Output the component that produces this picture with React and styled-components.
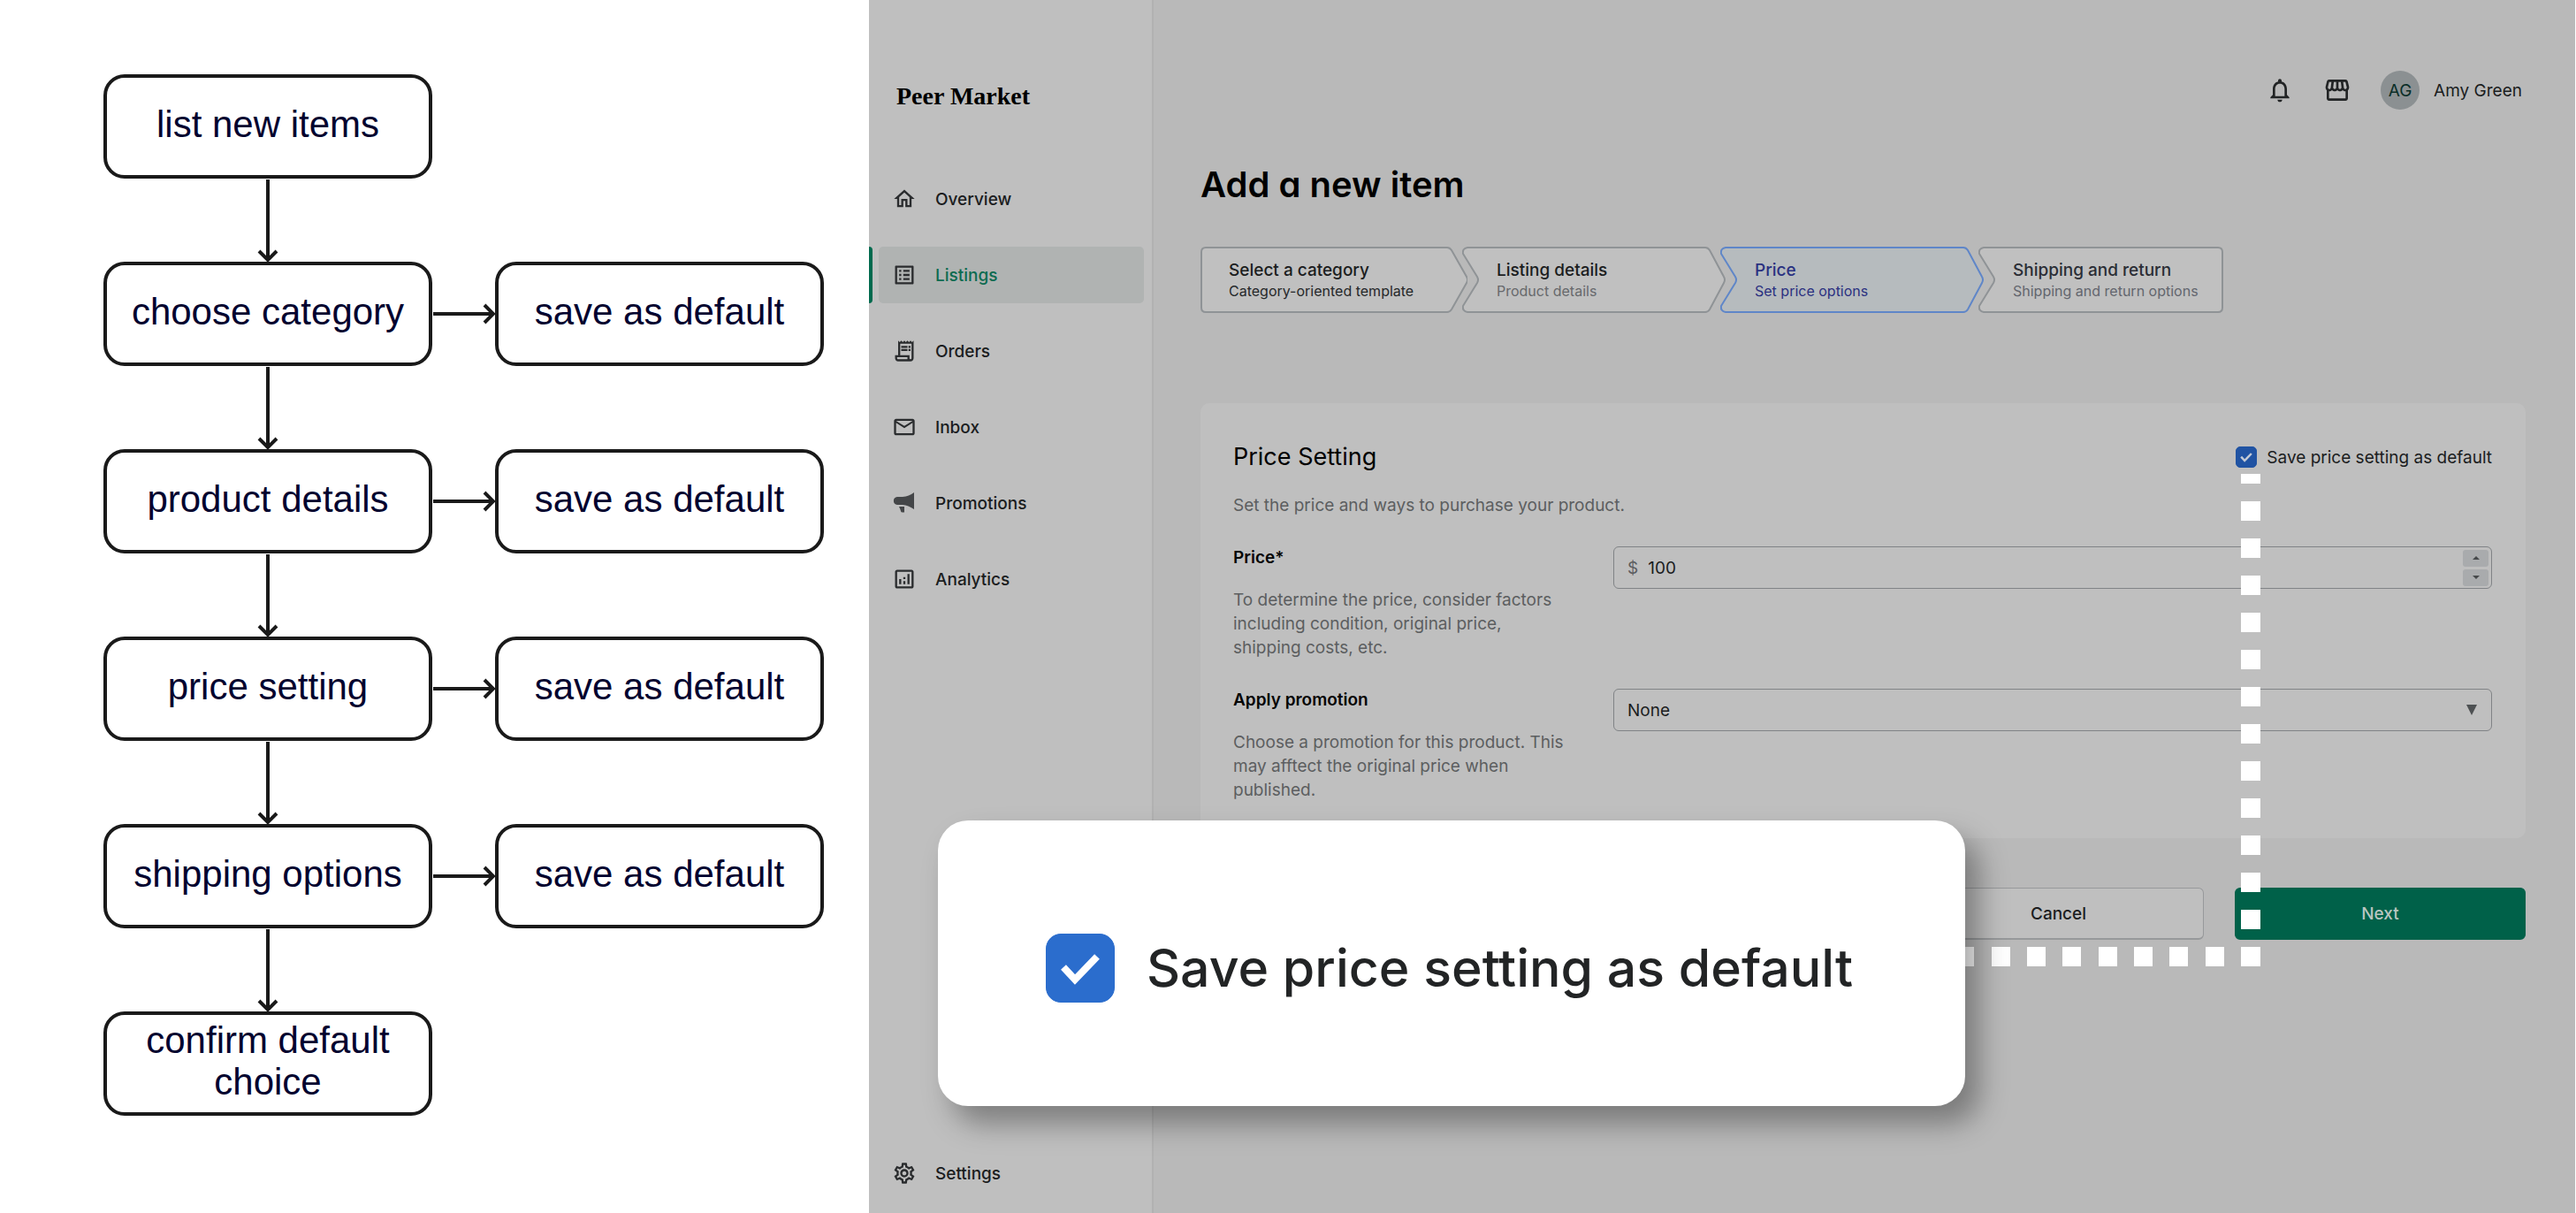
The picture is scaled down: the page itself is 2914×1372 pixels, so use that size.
import React, { useState } from "react";
import styled, { createGlobalStyle, css } from "styled-components";
import {
  MdOutlineHome,
  MdOutlineListAlt,
  MdOutlineReceiptLong,
  MdMailOutline,
  MdOutlineAnalytics,
  MdOutlineSettings,
  MdNotificationsNone,
  MdOutlineStorefront,
} from "react-icons/md";

const GlobalStyle = createGlobalStyle`
  *, *::before, *::after { box-sizing: border-box; }
  body { margin: 0; background: #fff; }
  button, input, select { font: inherit; color: inherit; }
  h1, h2, p, ul { margin: 0; padding: 0; }
`;

const ink = "#1b1d1e";
const muted = "#5c5e60";
const line = "#808386";
const green = "#006149";

const Page = styled.div`
  display: grid;
  grid-template-columns: minmax(0, 983fr) minmax(0, 1931fr);
  min-height: 100vh;
  font-family: Inter, "Liberation Sans", sans-serif;
  font-size: 19px;
  line-height: 27px;
  color: ${ink};
`;

/* ---------- flow chart ---------- */

const Flow = styled.section`
  display: flex;
  flex-direction: column;
  padding: 84px 0 0 117px;
  font-family: "Liberation Sans", Arial, sans-serif;
  font-size: 42px;
  line-height: 47px;
  color: #03032f;
`;

const FlowRow = styled.div`
  display: flex;
  align-items: center;
`;

const FlowNode = styled.div`
  display: flex;
  align-items: center;
  justify-content: center;
  width: 372px;
  height: 118px;
  padding: 0 16px 6px;
  border: 4px solid #1a1a1a;
  border-radius: 24px;
  text-align: center;
`;

const Arrow = styled.svg`
  display: block;
  fill: none;
  stroke: #1a1a1a;
  stroke-width: 4;
`;

const DownSlot = styled.div`
  display: flex;
  justify-content: center;
  width: 372px;
`;

const ArrowRight = () => (
  <Arrow width="71" height="34" viewBox="0 0 71 34" aria-hidden="true">
    <path d="M1 17H69" />
    <path d="M59 7L69 17L59 27" />
  </Arrow>
);

const ArrowDown = () => (
  <DownSlot>
    <Arrow width="34" height="94" viewBox="0 0 34 94" aria-hidden="true">
      <path d="M17 1V92" />
      <path d="M7 82L17 92L27 82" />
    </Arrow>
  </DownSlot>
);

/* ---------- application window ---------- */

const Shop = styled.div`
  position: relative;
  display: grid;
  grid-template-columns: 322px minmax(0, 1fr);
  margin-right: 1px;
  background: #b9b9b9;
`;

const Sidebar = styled.aside`
  display: flex;
  flex-direction: column;
  padding: 92px 0 13px;
  background: #bfbfbf;
  border-right: 2px solid #b1b1b1;
`;

const Brand = styled.div`
  padding-left: 31px;
  margin-bottom: 67px;
  font-family: "Liberation Serif", serif;
  font-size: 28px;
  font-weight: 700;
  line-height: 34px;
  color: #000;
`;

const Nav = styled.nav`
  display: flex;
  flex: 1;
  flex-direction: column;
  gap: 22px;
`;

const NavLink = styled.a`
  display: grid;
  grid-template-columns: 4px minmax(0, 1fr);
  column-gap: 7px;
  height: 64px;
  padding-right: 9px;
  font-weight: 500;
  color: ${ink};
  text-decoration: none;
  ${(p) => p.$last && css`margin-top: auto;`}
  ${(p) =>
    p.$active &&
    css`
      color: #0d6b50;
      &::before { background: #006a4e; }
      & > span { background: #b0b3b2; }
    `}
  &::before {
    content: "";
    border-radius: 0 4px 4px 0;
  }
`;

const NavBody = styled.span`
  display: flex;
  align-items: center;
  gap: 21px;
  padding-left: 15px;
  border-radius: 5px;
  svg { color: #2a2c2e; }
`;

const Main = styled.main`
  display: flex;
  flex-direction: column;
  padding: 80px 56px 0 53px;
`;

const TopBar = styled.header`
  display: flex;
  align-items: center;
  justify-content: flex-end;
  padding-right: 4px;
  margin-bottom: 63px;
`;

const IconButton = styled.button`
  display: flex;
  padding: 0;
  margin-right: 33px;
  border: 0;
  background: none;
  color: #222425;
`;

const Avatar = styled.span`
  display: grid;
  place-items: center;
  width: 44px;
  height: 44px;
  margin-right: 16px;
  border-radius: 50%;
  background: #8b9092;
  color: #0a2e28;
`;

const Title = styled.h1`
  margin-bottom: 48px;
  font-size: 40px;
  font-weight: 600;
  line-height: 44px;
  font-feature-settings: "cv11";
  color: #000;
`;

const Steps = styled.ol`
  display: flex;
  list-style: none;
  margin: 0 0 102px;
  padding: 0;
`;

const stepTones = {
  done: { title: "#1b1d1e", sub: "#26282a" },
  open: { title: "#1b1d1e", sub: "#67696c" },
  current: { title: "#2b3181", sub: "#2b3181" },
  next: { title: "#2a2d35", sub: "#63666e" },
};

const StepItem = styled.li`
  position: relative;
  display: flex;
  flex-direction: column;
  justify-content: center;
  width: ${(p) => p.$width}px;
  height: 75px;
  padding-left: ${(p) => (p.$first ? 32 : 39)}px;
  margin-left: ${(p) => (p.$first ? 0 : -6)}px;
  color: ${(p) => stepTones[p.$tone].title};
  font-weight: 500;
  line-height: 24px;
  white-space: nowrap;
  small {
    font-size: 16px;
    font-weight: 400;
    line-height: 22px;
    color: ${(p) => stepTones[p.$tone].sub};
  }
  span, small { position: relative; }
`;

const StepShape = styled.svg`
  position: absolute;
  inset: 0;
  fill: ${(p) => (p.$current ? "#b6bbbe" : "#c0c0c0")};
  stroke: ${(p) => (p.$current ? "#5f86c8" : "#8f9396")};
  stroke-width: 2;
`;

const stepPaths = {
  start: "M6 1H279Q282 1 284 4L301 34Q303 37.500 301 41L284 71Q282 74 279 74H6Q1 74 1 69V6Q1 1 6 1Z",
  middle:
    "M6 1H275Q278 1 280 4L296 34Q298 37.500 296 41L280 71Q278 74 275 74H6Q0 73 1 67L17 41Q19 37.500 17 34L1 8Q0 2 6 1Z",
  end: "M6 1H271Q276 1 276 6V69Q276 74 271 74H6Q0 73 1 67L17 41Q19 37.500 17 34L1 8Q0 2 6 1Z",
};

const Card = styled.section`
  padding: 44px 38px 41px 37px;
  margin-bottom: 56px;
  border-radius: 10px;
  background: #bfbfbf;
`;

const CardHead = styled.div`
  display: flex;
  align-items: center;
  justify-content: space-between;
  margin-bottom: 24px;
`;

const CardTitle = styled.h2`
  font-size: 27px;
  font-weight: 400;
  line-height: 34px;
  color: #000;
`;

const Muted = styled.p`
  color: ${muted};
`;

const Field = styled.div`
  display: grid;
  grid-template-columns: 376px minmax(0, 1fr);
  column-gap: 54px;
  align-items: start;
  margin-top: 33px;
`;

const FieldLabel = styled.label`
  display: block;
  margin-bottom: 21px;
  font-weight: 600;
  line-height: 26px;
  color: #050505;
`;

const Control = styled.div`
  display: flex;
  align-items: center;
  height: 48px;
  padding: 0 3px 0 15px;
  border: 1px solid ${line};
  border-radius: 6px;
`;

const Currency = styled.span`
  margin-right: 11px;
  color: #5b5d5f;
`;

const NumberInput = styled.input`
  flex: 1;
  min-width: 0;
  padding: 0;
  border: 0;
  outline: 0;
  background: none;
  appearance: textfield;
  &::-webkit-inner-spin-button { display: none; }
`;

const Spinner = styled.div`
  display: grid;
  gap: 3px;
`;

const SpinButton = styled.button`
  display: grid;
  place-items: center;
  width: 29px;
  height: 19px;
  padding: 0;
  border: 0;
  border-radius: 3px;
  background: #a9abad;
  color: #46494b;
`;

const SelectBox = styled.div`
  display: grid;
  grid-template-columns: minmax(0, 1fr) 29px;
  align-items: center;
  select, svg { grid-row: 1; }
  select { grid-column: 1 / -1; }
  svg { grid-column: 2; pointer-events: none; }
`;

const Select = styled.select`
  width: 100%;
  height: 48px;
  padding: 0 15px;
  border: 1px solid ${line};
  border-radius: 6px;
  background: none;
  appearance: none;
`;

const CheckLabel = styled.label`
  display: flex;
  align-items: center;
  gap: ${(p) => (p.$large ? 36 : 11)}px;
  font-size: ${(p) => (p.$large ? 59 : 19)}px;
  line-height: ${(p) => (p.$large ? 78 : 27)}px;
  font-weight: ${(p) => (p.$large ? 500 : 400)};
  color: ${(p) => (p.$large ? "#222425" : ink)};
`;

const Tick = styled.span`
  display: grid;
  width: ${(p) => (p.$large ? 78 : 24)}px;
  height: ${(p) => (p.$large ? 78 : 24)}px;
  & > * { grid-area: 1 / 1; }
  svg { pointer-events: none; }
  input {
    width: 100%;
    height: 100%;
    margin: 0;
    appearance: none;
    border: 1px solid ${(p) => (p.$large ? "#2b6dcd" : "#2053a3")};
    border-radius: ${(p) => (p.$large ? 17 : 5)}px;
  }
  input:checked { background: ${(p) => (p.$large ? "#2b6dcd" : "#2053a3")}; }
  input:not(:checked) + svg { visibility: hidden; }
`;

const Actions = styled.div`
  display: flex;
  justify-content: flex-end;
  gap: 35px;
`;

const ActionButton = styled.button`
  width: 329px;
  height: 59px;
  border: 1px solid ${(p) => (p.$primary ? green : "#97999b")};
  border-bottom-width: 2px;
  border-radius: 6px;
  background: ${(p) => (p.$primary ? green : "#bfbfbf")};
  color: ${(p) => (p.$primary ? "#b9c5c0" : ink)};
  font-weight: 500;
`;

/* dashed leader from the small tick box to its enlarged copy */
const Leader = styled.svg`
  position: absolute;
  top: 536px;
  right: 356px;
  fill: none;
  stroke: #fff;
  stroke-width: 22;
  pointer-events: none;
`;

const Callout = styled.div`
  position: absolute;
  top: 928px;
  left: 78px;
  right: 690px;
  display: flex;
  align-items: center;
  height: 323px;
  padding: 10px 0 0 122px;
  border-radius: 34px;
  background: #fff;
  box-shadow: 16px 20px 32px rgba(0, 0, 0, 0.34);
  white-space: nowrap;
`;

const PromotionIcon = () => (
  <svg width="28" height="28" viewBox="0 0 28 28" fill="#444648" aria-hidden="true">
    <path d="M25 2V21C20 18 17 16.500 12 16H6C0.500 16 0.500 7 6 7H12C17 6.500 21 5 25 2Z" />
    <path d="M8 18H14V24.500H11.500C10 24.500 10 23 9.500 21.500Z" />
  </svg>
);

const navItems = [
  { label: "Overview", Icon: MdOutlineHome },
  { label: "Listings", Icon: MdOutlineListAlt, active: true },
  { label: "Orders", Icon: MdOutlineReceiptLong },
  { label: "Inbox", Icon: MdMailOutline },
  { label: "Promotions", Icon: PromotionIcon },
  { label: "Analytics", Icon: MdOutlineAnalytics },
  { label: "Settings", Icon: MdOutlineSettings, last: true },
];

const flowSteps = [
  { label: "list new items" },
  { label: "choose category", save: true },
  { label: "product details", save: true },
  { label: "price setting", save: true },
  { label: "shipping options", save: true },
  { label: "confirm default choice" },
];

const steps = [
  { title: "Select a category", sub: "Category-oriented template", shape: "start", width: 302, tone: "done" },
  { title: "Listing details", sub: "Product details", shape: "middle", width: 298, tone: "open" },
  { title: "Price", sub: "Set price options", shape: "middle", width: 298, tone: "current" },
  { title: "Shipping and return", sub: "Shipping and return options", shape: "end", width: 277, tone: "next" },
];

function SaveDefault({ large, checked, onChange }) {
  return (
    <CheckLabel $large={large}>
      <Tick $large={large}>
        <input type="checkbox" checked={checked} onChange={onChange} />
        <svg viewBox="0 0 78 78" aria-hidden="true">
          <path
            d="M20 38L33 52L58 26"
            fill="none"
            stroke={large ? "#fff" : "#c3cad6"}
            strokeWidth="8"
          />
        </svg>
      </Tick>
      Save price setting as default
    </CheckLabel>
  );
}

export default function App() {
  const [saved, setSaved] = useState(true);
  const [price, setPrice] = useState(100);
  const toggle = (e) => setSaved(e.target.checked);

  return (
    <Page>
      <GlobalStyle />
      <Flow aria-label="Listing flow">
        {flowSteps.map((step, i) => (
          <React.Fragment key={step.label}>
            {i > 0 && <ArrowDown />}
            <FlowRow>
              <FlowNode>{step.label}</FlowNode>
              {step.save && (
                <>
                  <ArrowRight />
                  <FlowNode>save as default</FlowNode>
                </>
              )}
            </FlowRow>
          </React.Fragment>
        ))}
      </Flow>

      <Shop>
        <Sidebar>
          <Brand>Peer Market</Brand>
          <Nav>
            {navItems.map(({ label, Icon, active, last }) => (
              <NavLink
                key={label}
                href={`#${label.toLowerCase()}`}
                $active={active}
                $last={last}
                aria-current={active ? "page" : undefined}
              >
                <NavBody>
                  <Icon size={28} />
                  {label}
                </NavBody>
              </NavLink>
            ))}
          </Nav>
        </Sidebar>

        <Main>
          <TopBar>
            <IconButton type="button" aria-label="Notifications">
              <MdNotificationsNone size={32} />
            </IconButton>
            <IconButton type="button" aria-label="Store">
              <MdOutlineStorefront size={32} />
            </IconButton>
            <Avatar>AG</Avatar>
            <span>Amy Green</span>
          </TopBar>

          <Title>Add a new item</Title>

          <Steps>
            {steps.map((s, i) => (
              <StepItem
                key={s.title}
                $width={s.width}
                $first={i === 0}
                $tone={s.tone}
                aria-current={s.tone === "current" ? "step" : undefined}
              >
                <StepShape
                  width={s.width}
                  height="75"
                  $current={s.tone === "current"}
                  aria-hidden="true"
                >
                  <path d={stepPaths[s.shape]} />
                </StepShape>
                <span>{s.title}</span>
                <small>{s.sub}</small>
              </StepItem>
            ))}
          </Steps>

          <Card>
            <CardHead>
              <CardTitle>Price Setting</CardTitle>
              <SaveDefault checked={saved} onChange={toggle} />
            </CardHead>
            <Muted>Set the price and ways to purchase your product.</Muted>

            <Field>
              <div>
                <FieldLabel htmlFor="price">Price*</FieldLabel>
                <Muted>
                  To determine the price, consider factors including condition,
                  original price, shipping costs, etc.
                </Muted>
              </div>
              <Control>
                <Currency>$</Currency>
                <NumberInput
                  id="price"
                  type="number"
                  value={price}
                  onChange={(e) => setPrice(Number(e.target.value))}
                />
                <Spinner>
                  <SpinButton type="button" aria-label="Increase price" onClick={() => setPrice(price + 1)}>
                    <svg width="8" height="4" viewBox="0 0 8 4" fill="currentColor">
                      <path d="M4 0L8 4H0Z" />
                    </svg>
                  </SpinButton>
                  <SpinButton type="button" aria-label="Decrease price" onClick={() => setPrice(price - 1)}>
                    <svg width="8" height="4" viewBox="0 0 8 4" fill="currentColor">
                      <path d="M0 0H8L4 4Z" />
                    </svg>
                  </SpinButton>
                </Spinner>
              </Control>
            </Field>

            <Field>
              <div>
                <FieldLabel htmlFor="promotion">Apply promotion</FieldLabel>
                <Muted>
                  Choose a promotion for this product. This may afftect the
                  original price when published.
                </Muted>
              </div>
              <SelectBox>
                <Select id="promotion" defaultValue="None">
                  <option>None</option>
                </Select>
                <svg width="12" height="12" viewBox="0 0 12 12" fill="#4d5052" aria-hidden="true">
                  <path d="M0 0H12L6 12Z" />
                </svg>
              </SelectBox>
            </Field>
          </Card>

          <Actions>
            <ActionButton type="button">Cancel</ActionButton>
            <ActionButton type="submit" $primary>
              Next
            </ActionButton>
          </Actions>
        </Main>

        <Leader width="334" height="557" viewBox="0 0 334 557" aria-hidden="true">
          <path d="M323 0V557" strokeDasharray="11 20 22 20 22 20 22 20 22 20 22 20 22 20 22 20 22 20 22 20 22 20 22 20 22 20 22 20" />
          <path d="M312 546H0" strokeDasharray="21 19 21 20 21 19" strokeDashoffset="21" />
        </Leader>

        <Callout>
          <SaveDefault large checked={saved} onChange={toggle} />
        </Callout>
      </Shop>
    </Page>
  );
}
